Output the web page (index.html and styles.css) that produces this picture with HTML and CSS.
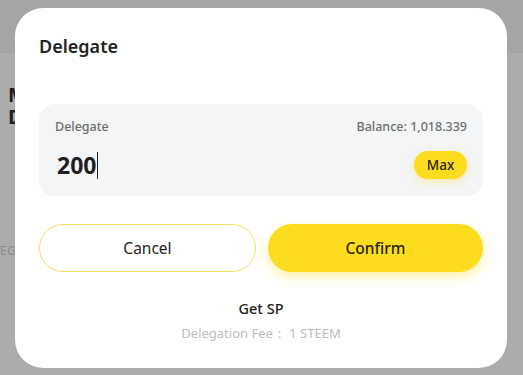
FILE: index.html
```html
<!DOCTYPE html>
<html lang="en">
<head>
    <meta charset="UTF-8">
    <meta name="viewport" content="width=device-width, initial-scale=1.0">
    <title>Delegate</title>
    <link rel="stylesheet" href="styles.css">
</head>
<body>
    <div class="page">
        <div class="page-header"></div>
        <div class="page-body">
            <div class="page-title">M</div>
            <div class="page-title">D</div>
            <div class="page-label">EGA</div>
        </div>
    </div>

    <div class="modal">
        <h2 class="modal-title">Delegate</h2>
        <div class="amount-box">
            <div class="amount-row">
                <span class="amount-label">Delegate</span>
                <span class="balance">Balance: 1,018.339</span>
            </div>
            <div class="amount-row">
                <span class="amount-value">200<span class="caret"></span></span>
                <button class="max-btn">Max</button>
            </div>
        </div>
        <div class="actions">
            <button class="btn btn-cancel">Cancel</button>
            <button class="btn btn-confirm">Confirm</button>
        </div>
        <div class="footer">
            <div class="get-sp">Get SP</div>
            <div class="fee">Delegation Fee： 1 STEEM</div>
        </div>
    </div>
</body>
</html>
```

FILE: styles.css
```css
body {
    font-family: "Noto Sans", "Open Sans", Arial, sans-serif;
    background-color: #a9a9a9;
    margin: 0;
    padding: 0;
    width: 523px;
    height: 375px;
    overflow: hidden;
    position: relative;
}
.page-header {
    height: 52px;
    background: #a5a5a5;
    border-bottom: 1px solid #a2a2a2;
}
.page-body {
    background: #acacac;
    height: 322px;
    box-sizing: border-box;
    padding-top: 31px;
}
.page-title {
    padding-left: 8px;
    font-size: 20px;
    font-weight: 700;
    line-height: 22px;
    height: 22px;
    color: #1e1e1e;
}
.page-label {
    margin-top: 114px;
    font-size: 12px;
    color: #8a8a8a;
    letter-spacing: 0.5px;
}
.modal {
    position: absolute;
    left: 15px;
    top: 8px;
    width: 444px;
    height: 360px;
    padding: 0 24px;
    background: #fff;
    border-radius: 28px;
}
.modal-title {
    margin: 26px 0 0;
    font-size: 18px;
    font-weight: 600;
    line-height: 24px;
    color: #222;
}
.amount-box {
    margin-top: 46px;
    height: 92px;
    box-sizing: border-box;
    padding: 14px 16px 0 16px;
    background: #f4f5f7;
    border-radius: 16px;
}
.amount-row {
    display: flex;
    justify-content: space-between;
    align-items: center;
}
.amount-label,
.balance {
    font-size: 12.5px;
    font-weight: 500;
    line-height: 18px;
    color: #6e6e6e;
}
.amount-row + .amount-row {
    margin-top: 14px;
}
.amount-value {
    padding-left: 2px;
    font-size: 23px;
    font-weight: 700;
    line-height: 30px;
    color: #1f1f1f;
    display: flex;
    align-items: center;
}
.caret {
    display: inline-block;
    width: 1px;
    height: 27px;
    margin-left: 1px;
    background: #222;
}
.max-btn {
    width: 53px;
    height: 28px;
    border: none;
    border-radius: 14px;
    background: #fcdc1e;
    font-family: inherit;
    font-size: 13.5px;
    font-weight: 500;
    color: #2a2300;
    box-shadow: 0 3px 8px rgba(252, 220, 30, 0.35);
}
.actions {
    margin-top: 28px;
    display: flex;
    gap: 12px;
}
.btn {
    flex: 1;
    height: 48px;
    border-radius: 24px;
    font-family: inherit;
    font-size: 15.5px;
    cursor: pointer;
}
.btn-cancel {
    background: #fff;
    border: 1px solid #f6df58;
    color: #222;
}
.btn-confirm {
    background: #fcdc1e;
    border: none;
    font-weight: 500;
    color: #2b2400;
    box-shadow: 0 5px 12px rgba(252, 220, 30, 0.4);
}
.footer {
    margin-top: 26px;
    text-align: center;
}
.get-sp {
    font-size: 14.5px;
    font-weight: 500;
    line-height: 20px;
    color: #222;
}
.fee {
    margin-top: 6px;
    font-size: 13px;
    line-height: 18px;
    color: #bcbcbc;
}
```
